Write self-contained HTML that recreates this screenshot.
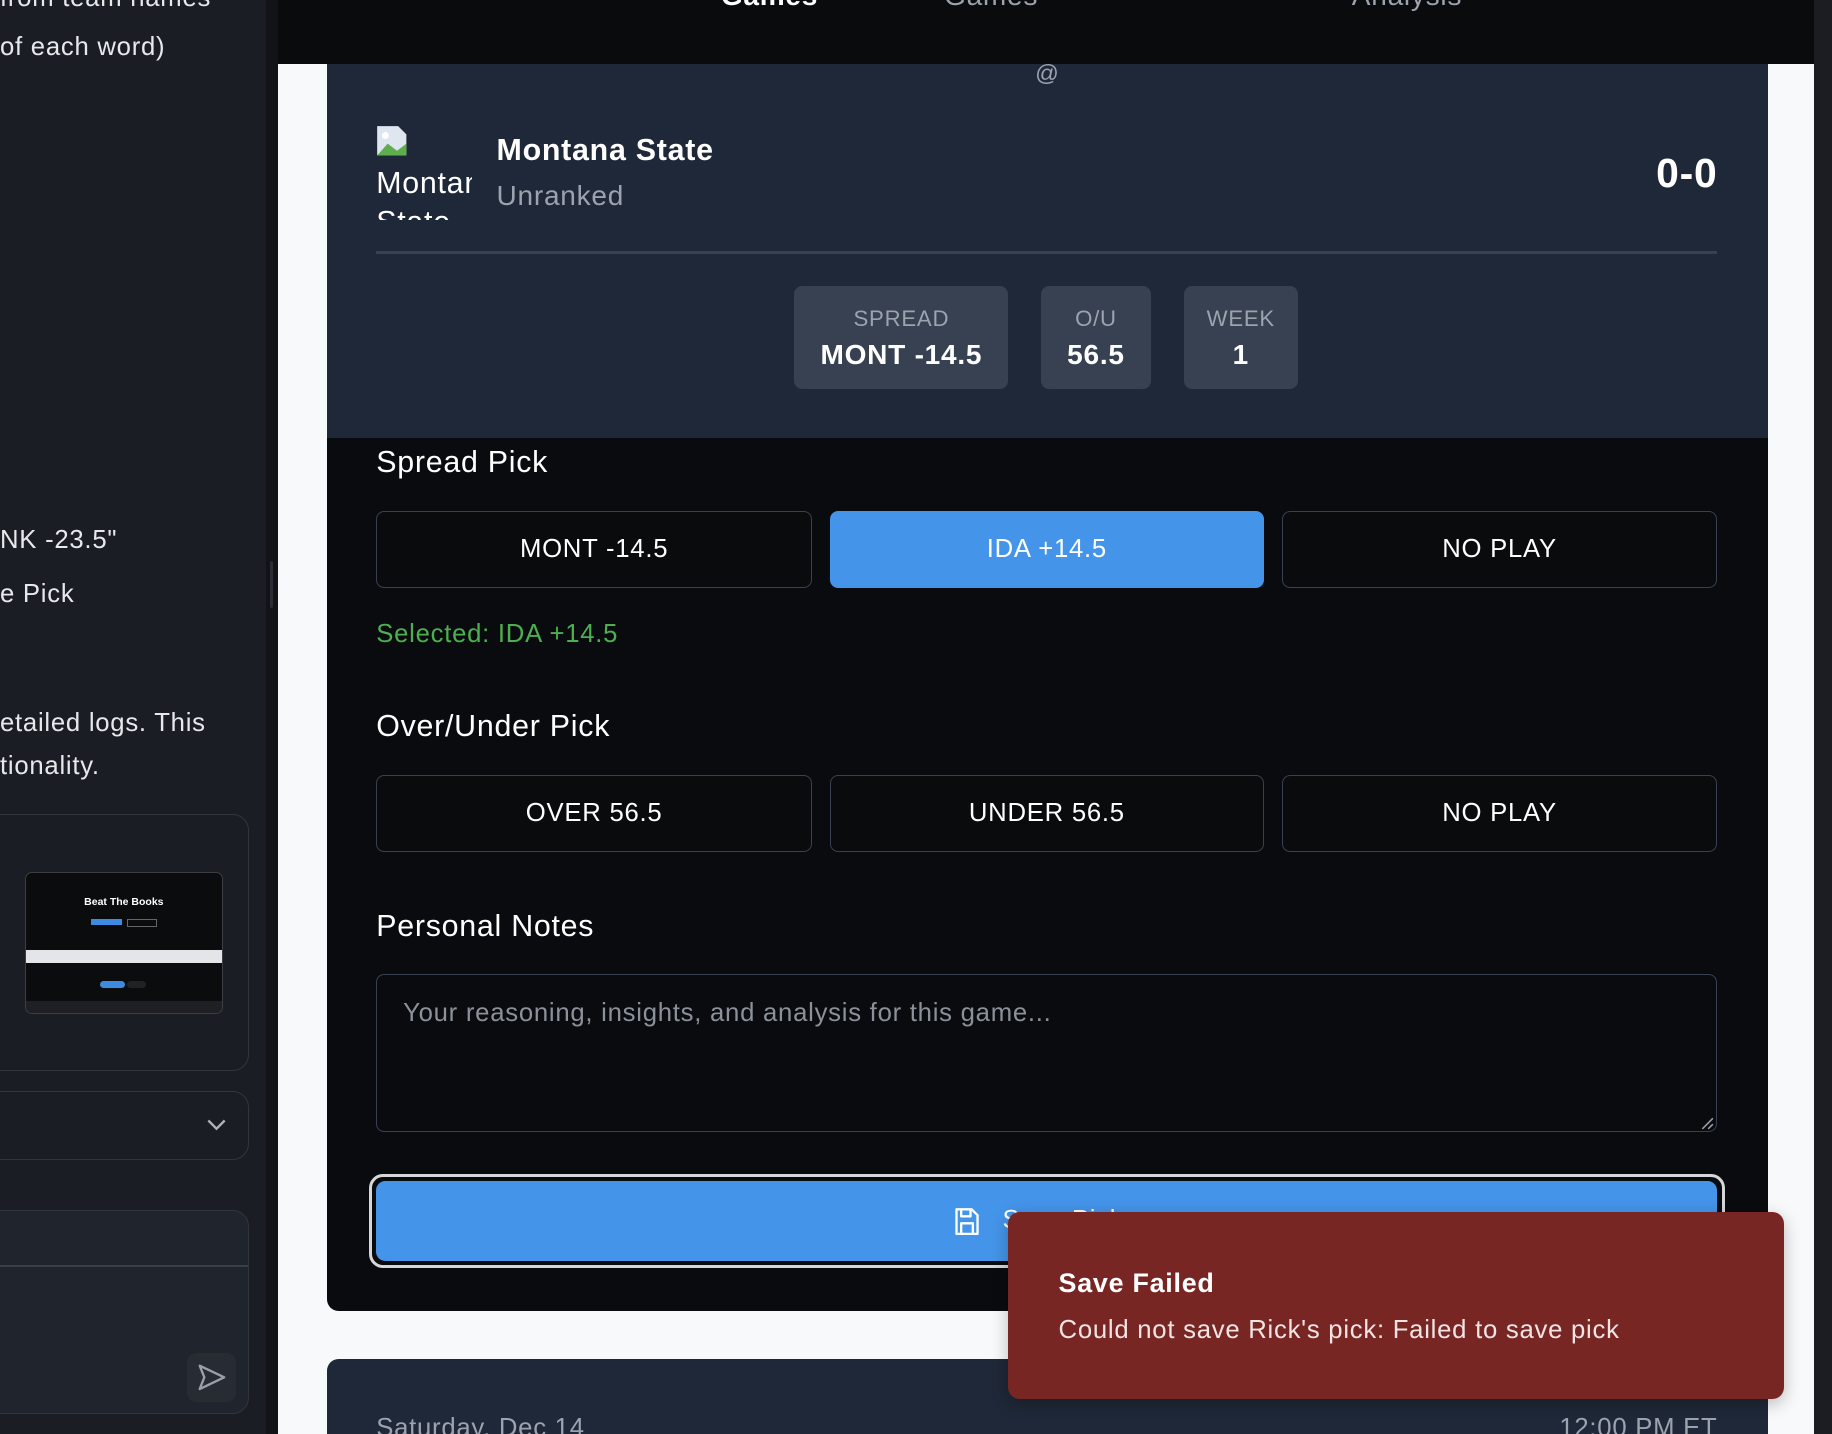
<!DOCTYPE html>
<html><head><meta charset="utf-8">
<style>
html,body{margin:0;padding:0;width:1832px;height:1434px;overflow:hidden;background:#0a0b0d;font-family:"Liberation Sans",sans-serif;}
#w{position:absolute;left:0;top:0;width:1568px;height:1227.5px;zoom:1.16837;overflow:hidden;background:#0a0b0d;letter-spacing:0.04em;}
.a{position:absolute;}
.sb{left:0;top:0;width:228px;height:1228px;background:#1a1d24;}
.st{color:#e6e8eb;font-size:22px;white-space:nowrap;}
.btn{position:absolute;height:66px;border:1px solid #374151;border-radius:7px;background:#0a0b0d;color:#fff;font-size:22px;display:flex;align-items:center;justify-content:center;box-sizing:border-box;}
.box{position:absolute;top:245px;height:88px;background:#374151;border-radius:7px;text-align:center;color:#fff;}
.box .l{color:#9ca3af;font-size:19px;margin-top:17px;}
.box .v{font-weight:bold;font-size:24px;margin-top:6px;}
.h{color:#fff;font-size:26px;}
</style></head><body>
<div id="w">
 <div class="a sb"></div>
 <div class="a st" style="left:0;top:-14px">from team names</div>
 <div class="a st" style="left:0;top:28px">of each word)</div>
 <div class="a st" style="left:0;top:450px">NK -23.5"</div>
 <div class="a st" style="left:0;top:496px">e Pick</div>
 <div class="a st" style="left:0;top:607px">etailed logs. This</div>
 <div class="a st" style="left:0;top:644px">tionality.</div>
 <div class="a" style="left:-20px;top:697px;width:233px;height:220px;border:1px solid #30363c;border-radius:14px;box-sizing:border-box"></div>
 <div class="a" style="left:21px;top:746px;width:170px;height:122px;background:#0b0c0e;border:1px solid #3a3f46;border-radius:6px;box-sizing:border-box;overflow:hidden">
  <div class="a" style="left:0;top:20px;width:100%;text-align:center;color:#fff;font-size:9px;font-weight:bold;letter-spacing:0">Beat The Books</div>
  <div class="a" style="left:56px;top:40px;width:27px;height:5px;background:#3d8be0"></div>
  <div class="a" style="left:87px;top:40px;width:24px;height:5px;border:1px solid #666"></div>
  <div class="a" style="left:0;top:66px;width:100%;height:11px;background:#e4e5e8"></div>
  <div class="a" style="left:64px;top:93px;width:21px;height:6px;background:#3d8be0;border-radius:3px"></div>
  <div class="a" style="left:87px;top:93px;width:16px;height:6px;background:#222;border-radius:3px"></div>
  <div class="a" style="left:0;top:110px;width:100%;height:12px;background:#1f2023"></div>
 </div>
 <div class="a" style="left:-20px;top:934px;width:233px;height:59px;border:1px solid #30363c;border-radius:14px;box-sizing:border-box"></div>
 <svg class="a" style="left:176px;top:956px" width="18" height="12" viewBox="0 0 18 12"><path d="M2 3l7 7 7-7" stroke="#aeb3ba" stroke-width="2" fill="none"/></svg>
 <div class="a" style="left:-20px;top:1036px;width:233px;height:174px;border:1px solid #30363c;border-radius:14px;box-sizing:border-box;background:#20242c"></div>
 <div class="a" style="left:0;top:1083px;width:212px;height:1px;background:#3a3f46"></div>
 <div class="a" style="left:160px;top:1158px;width:42px;height:42px;background:#272b32;border-radius:8px"></div>
 <svg class="a" style="left:167px;top:1165px" width="28" height="28" viewBox="0 0 28 28"><path d="M4 4l21 10-21 10 4-10z" stroke="#9aa0a8" stroke-width="2" fill="none" stroke-linejoin="round"/></svg>
 <div class="a" style="left:228px;top:0;width:10px;height:1228px;background:#111318"></div>
 <div class="a" style="left:231px;top:480px;width:3px;height:40px;background:#2a2d33;border-radius:2px"></div>

 <div class="a" style="left:238px;top:55px;width:1275px;height:1173px;background:#f8f9fa"></div>
 <div class="a" style="left:1513px;top:55px;width:40px;height:1173px;background:#f8f9fa"></div>
 <div class="a" style="left:1553px;top:0;width:15px;height:1228px;background:#1b1d22"></div>
 <div class="a" style="left:238px;top:0;width:1315px;height:55px;background:#0a0b0d"></div>
 <div class="a" style="left:617px;top:-17px;color:#fff;font-size:24px;font-weight:bold">Games</div>
 <div class="a" style="left:808px;top:-17px;color:#9ca3af;font-size:24px">Games</div>
 <div class="a" style="left:1157px;top:-17px;color:#9ca3af;font-size:24px">Analysis</div>

 <div class="a" style="left:280px;top:55px;width:1233px;height:1067px;background:#0a0b0e;border-radius:0 0 10px 10px;overflow:hidden">
  <div class="a" style="left:0;top:0;width:1233px;height:320px;background:#1f2838"></div>
 </div>
 <div class="a" style="left:886px;top:51px;color:#9ca3af;font-size:20px">@</div>
 <svg class="a" style="left:322px;top:107px" width="27" height="27" viewBox="0 0 27 27"><path d="M1 1h18l7 7v18H1z" fill="#dfe6f0"/><path d="M1 26l9-10 8 6 8-6v10z" fill="#5fae4e"/><circle cx="8" cy="9" r="3" fill="#fff"/></svg>
 <div class="a" style="left:322px;top:140px;width:82px;height:48px;overflow:hidden;color:#fff;font-size:26px;line-height:34px;white-space:nowrap">Montana<br>State</div>
 <div class="a" style="left:425px;top:115px;color:#fff;font-size:26px;font-weight:bold">Montana State</div>
 <div class="a" style="left:425px;top:154px;color:#9ca3af;font-size:24px">Unranked</div>
 <div class="a" style="right:98px;top:128px;color:#fff;font-size:35px;font-weight:bold">0-0</div>
 <div class="a" style="left:322px;top:215px;width:1148px;height:2px;background:#374151"></div>
 <div class="box" style="left:680px;width:183px"><div class="l">SPREAD</div><div class="v">MONT -14.5</div></div>
 <div class="box" style="left:891px;width:94px"><div class="l">O/U</div><div class="v">56.5</div></div>
 <div class="box" style="left:1013px;width:98px"><div class="l">WEEK</div><div class="v">1</div></div>

 <div class="a h" style="left:322px;top:382px">Spread Pick</div>
 <div class="btn" style="left:322px;top:437px;width:373px">MONT -14.5</div>
 <div class="btn" style="left:710px;top:437px;width:372px;background:#4494e9;border-color:#4494e9">IDA +14.5</div>
 <div class="btn" style="left:1097px;top:437px;width:373px">NO PLAY</div>
 <div class="a" style="left:322px;top:531px;color:#4caf50;font-size:22px">Selected: IDA +14.5</div>
 <div class="a h" style="left:322px;top:608px">Over/Under Pick</div>
 <div class="btn" style="left:322px;top:663px;width:373px">OVER 56.5</div>
 <div class="btn" style="left:710px;top:663px;width:372px">UNDER 56.5</div>
 <div class="btn" style="left:1097px;top:663px;width:373px">NO PLAY</div>
 <div class="a h" style="left:322px;top:779px">Personal Notes</div>
 <div class="a" style="left:322px;top:834px;width:1148px;height:135px;border:1px solid #374151;border-radius:7px;box-sizing:border-box"></div>
 <div class="a" style="left:345px;top:855px;color:#8b919a;font-size:22px">Your reasoning, insights, and analysis for this game...</div>
 <svg class="a" style="left:1455px;top:955px" width="12" height="12"><path d="M2 11L11 2M7 11l4-4" stroke="#9ca3af" stroke-width="1.3"/></svg>
 <div class="a" style="left:316px;top:1005px;width:1160px;height:80px;border:3px solid #d6d7d9;border-radius:12px;box-sizing:border-box"></div>
 <div class="a" style="left:322px;top:1011px;width:1148px;height:68px;background:#4494e9;border-radius:8px"></div>
 <svg class="a" style="left:816px;top:1033px" width="24" height="25" viewBox="0 0 24 25"><path d="M3 2h13l5 5v16H3z M7 2v6h8V2 M7 23v-9h10v9" stroke="#fff" stroke-width="2" fill="none" stroke-linejoin="round"/></svg>
 <div class="a" style="left:858px;top:1032px;color:#fff;font-size:22px">Save Pick</div>

 <div class="a" style="left:280px;top:1163px;width:1233px;height:80px;background:#1f2838;border-radius:10px"></div>
 <div class="a" style="left:322px;top:1210px;color:#9ca3af;font-size:22px">Saturday, Dec 14</div>
 <div class="a" style="right:98px;top:1210px;color:#9ca3af;font-size:22px">12:00 PM ET</div>

 <div class="a" style="left:863px;top:1037px;width:664px;height:160px;background:#772624;border-radius:10px;box-shadow:0 4px 14px rgba(0,0,0,.25)"></div>
 <div class="a" style="left:906px;top:1085px;color:#fff;font-size:23px;font-weight:bold">Save Failed</div>
 <div class="a" style="left:906px;top:1126px;color:#f3e4e4;font-size:22px">Could not save Rick's pick: Failed to save pick</div>
</div>
</body></html>
